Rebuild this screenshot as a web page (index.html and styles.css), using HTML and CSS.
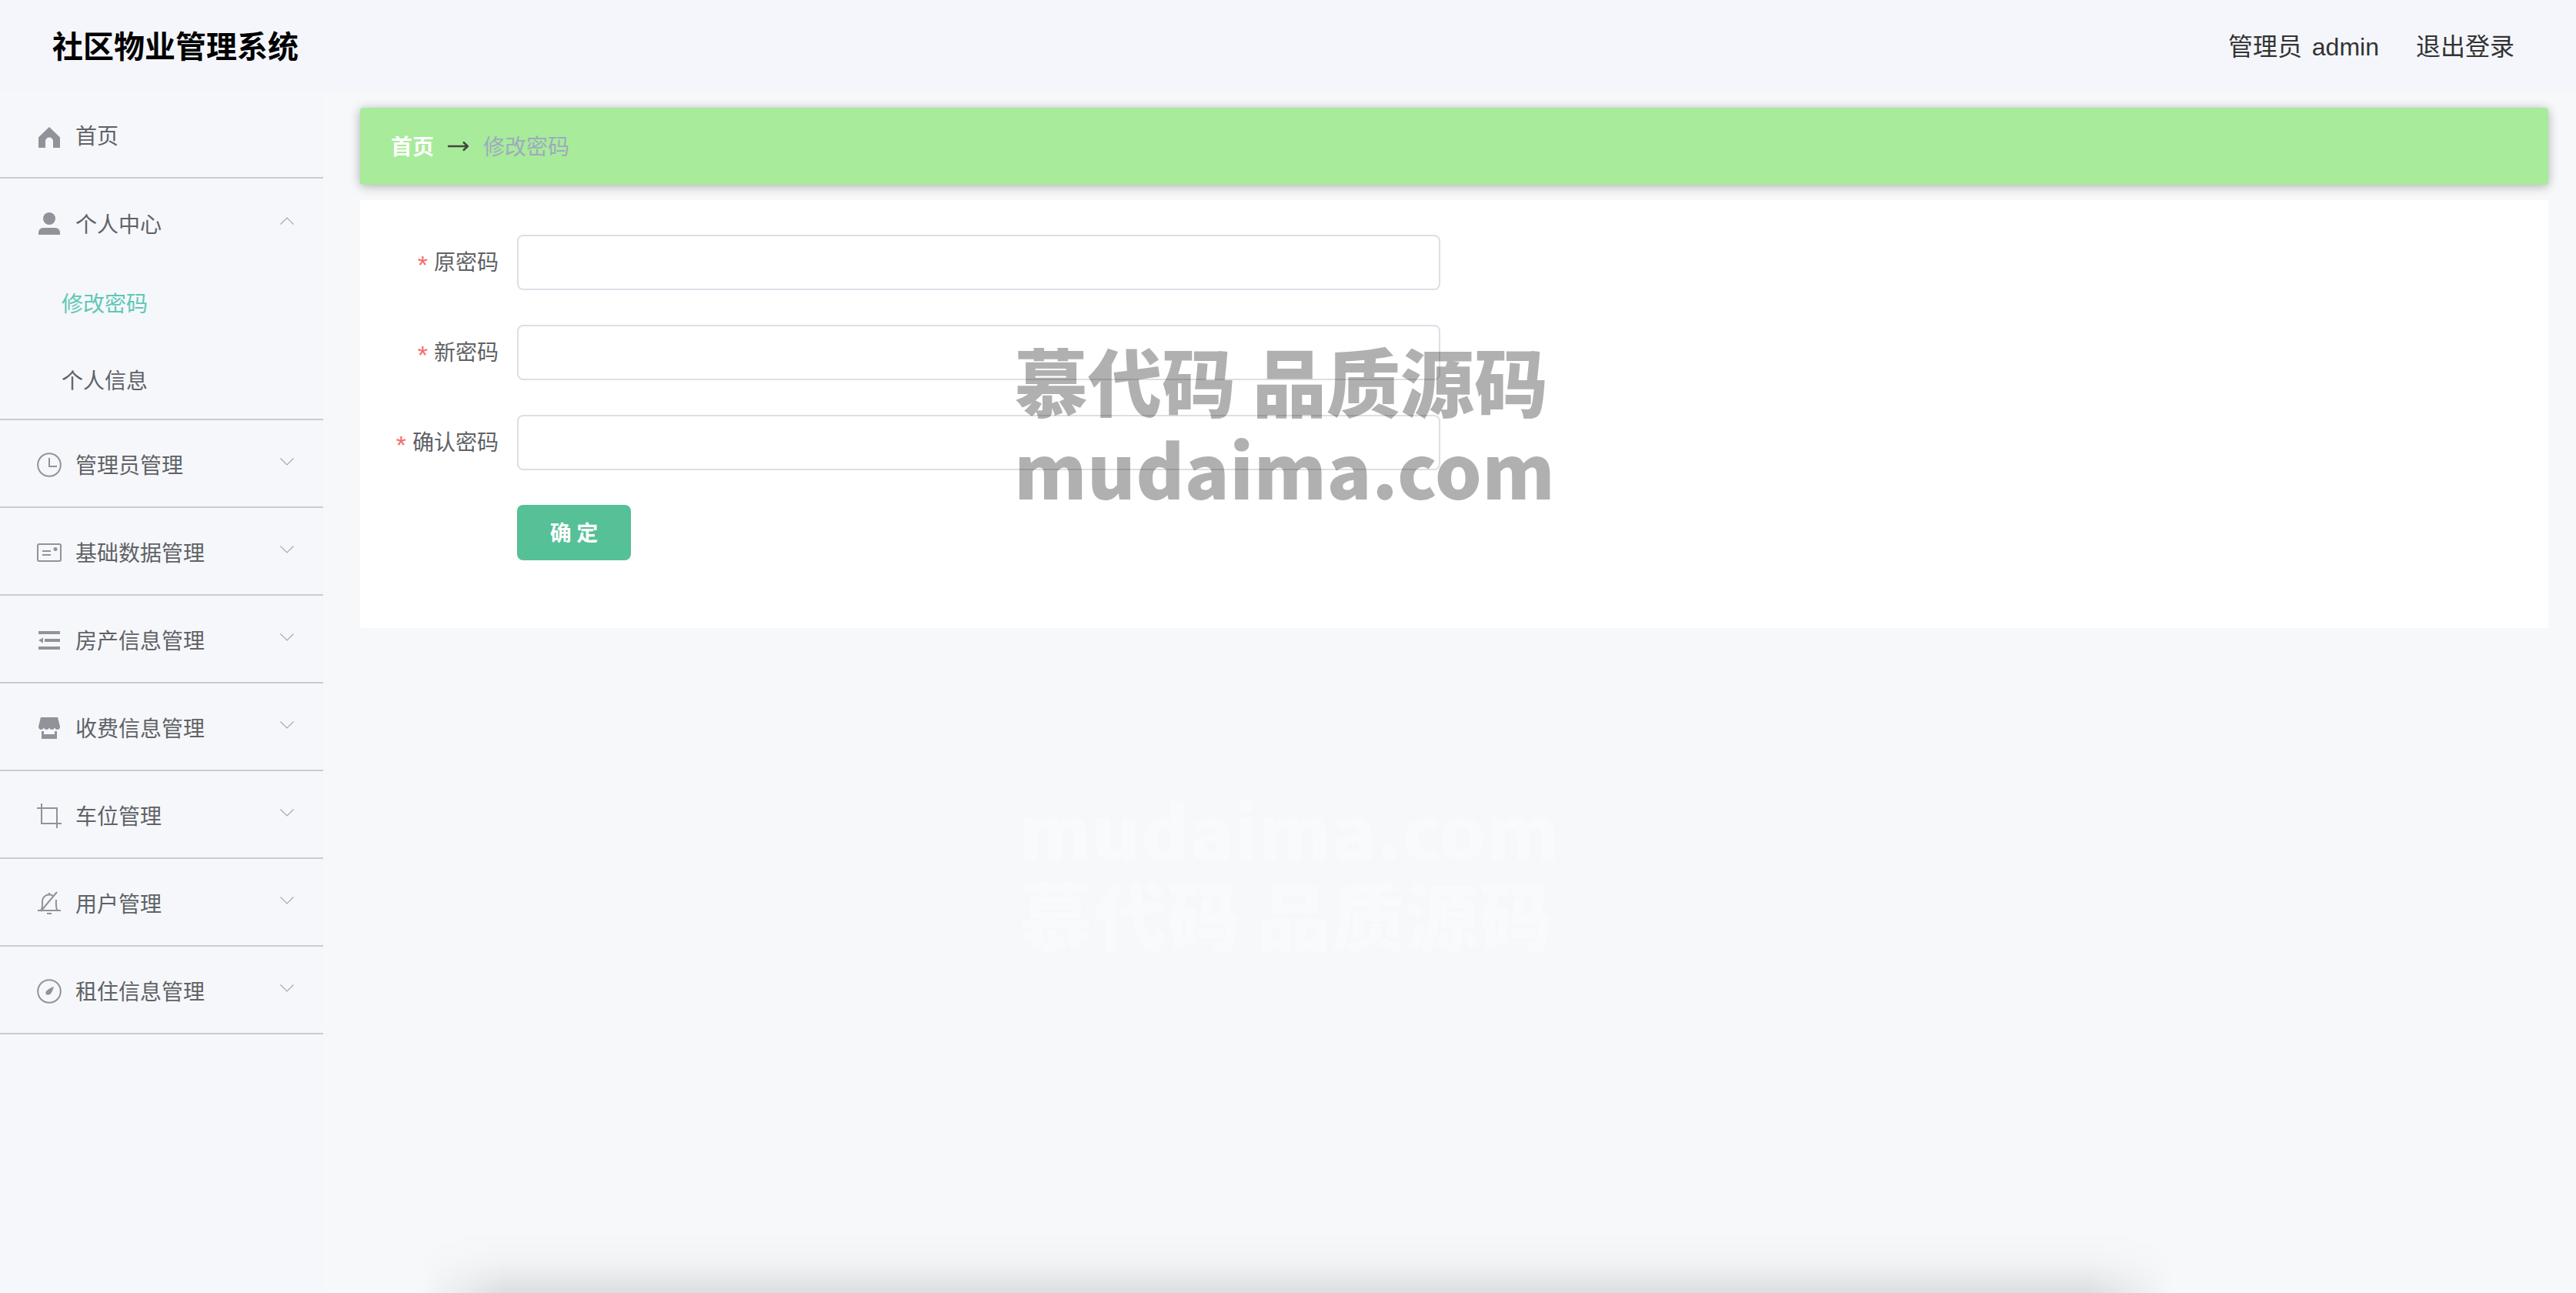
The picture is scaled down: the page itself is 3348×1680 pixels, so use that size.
FILE: index.html
```html
<!DOCTYPE html>
<html lang="zh-CN">
<head>
<meta charset="utf-8">
<title>社区物业管理系统</title>
<link rel="stylesheet" href="styles.css">
</head>
<body>
<div class="app">
  <header class="topbar">
    <div class="brand">社区物业管理系统</div>
    <div class="account">
      <span class="user">管理员 admin</span>
      <span>退出登录</span>
    </div>
  </header>
  <div class="body-row">
    <aside class="aside">
      <a class="item first">
        <svg class="ico" viewBox="0 0 32 32"><path d="M16 5 30 18.500V32H21V23.500A5 5 0 0 0 11 23.500V32H2V18.500Z"/></svg>
        <span>首页</span>
      </a>
      <div class="group">
        <a class="item no-line">
          <svg class="ico" viewBox="0 0 32 32"><circle cx="16" cy="9" r="8"/><path d="M2 30V27A6 6 0 0 1 8 21H24A6 6 0 0 1 30 27V30Z"/></svg>
          <span>个人中心</span>
          <svg class="chev" viewBox="0 0 18 10"><path d="M.5 9.500 9 1l8.500 8.500"/></svg>
        </a>
        <a class="sub active">修改密码</a>
        <a class="sub">个人信息</a>
      </div>
      <a class="item">
        <svg class="ico line" viewBox="0 0 32 32"><circle cx="16" cy="16" r="14.800"/><path d="M16 7V18H26"/></svg>
        <span>管理员管理</span>
        <svg class="chev" viewBox="0 0 18 10"><path d="M.5.500 9 9l8.500-8.500"/></svg>
      </a>
      <a class="item">
        <svg class="ico line" viewBox="0 0 32 32"><rect x="1" y="5" width="30" height="22" rx="2"/><path d="M7 14H18M7 19H18"/><circle class="dot" cx="24" cy="11.500" r="2.500"/></svg>
        <span>基础数据管理</span>
        <svg class="chev" viewBox="0 0 18 10"><path d="M.5.500 9 9l8.500-8.500"/></svg>
      </a>
      <a class="item">
        <svg class="ico" viewBox="0 0 32 32"><path d="M2 4H30V8H2ZM10 14H30V18H10ZM2 24H30V28H2ZM2 16 8 12.500V19.500Z"/></svg>
        <span>房产信息管理</span>
        <svg class="chev" viewBox="0 0 18 10"><path d="M.5.500 9 9l8.500-8.500"/></svg>
      </a>
      <a class="item">
        <svg class="ico" viewBox="0 0 32 32"><path d="M5 2H27L30 14Q30 18 26.500 18 24 18 23 15.500 22 18 19.500 18 17 18 16 15.500 15 18 12.500 18 10 18 9 15.500 8 18 5.500 18 2 18 2 14ZM6 20H9V24H23V20H26V30H6Z"/></svg>
        <span>收费信息管理</span>
        <svg class="chev" viewBox="0 0 18 10"><path d="M.5.500 9 9l8.500-8.500"/></svg>
      </a>
      <a class="item">
        <svg class="ico line" viewBox="0 0 32 32"><path d="M6 0V26H32M0 6H26V32"/></svg>
        <span>车位管理</span>
        <svg class="chev" viewBox="0 0 18 10"><path d="M.5.500 9 9l8.500-8.500"/></svg>
      </a>
      <a class="item">
        <svg class="ico line" viewBox="0 0 32 32"><path d="M1 25H31M5 25C8 21 7 17 7 13A9 9 0 0 1 21 6M25 11C25 17 24 22 27 25M13 29H19M16 2V4M5 26 26 1"/></svg>
        <span>用户管理</span>
        <svg class="chev" viewBox="0 0 18 10"><path d="M.5.500 9 9l8.500-8.500"/></svg>
      </a>
      <a class="item">
        <svg class="ico line" viewBox="0 0 32 32"><circle cx="16" cy="16" r="14.800"/><path class="dot" d="M22 10C21 14 19 18 17.500 19.500 16 21 13 21 12 20 11 19 11 17 12.500 15.500 14 14 18 11 22 10Z"/></svg>
        <span>租住信息管理</span>
        <svg class="chev" viewBox="0 0 18 10"><path d="M.5.500 9 9l8.500-8.500"/></svg>
      </a>
    </aside>
    <main class="main">
      <nav class="crumb">
        <span class="crumb-home">首页</span>
        <svg class="crumb-sep" viewBox="0 0 27 14"><path d="M0 7H26M20 1.500 26 7 20 12.500"/></svg>
        <span class="crumb-cur">修改密码</span>
      </nav>
      <form class="card">
        <div class="field">
          <label class="label"><span class="req">*</span>原密码</label>
          <input class="input" type="password">
        </div>
        <div class="field">
          <label class="label"><span class="req">*</span>新密码</label>
          <input class="input" type="password">
        </div>
        <div class="field">
          <label class="label"><span class="req">*</span>确认密码</label>
          <input class="input" type="password">
        </div>
        <div class="field">
          <span class="label"></span>
          <button class="btn" type="button">确 定</button>
        </div>
      </form>
    </main>
  </div>
</div>
<div class="mark mark-top">慕代码 品质源码<br><span class="mark-latin">mudaima.com</span></div>
<div class="mark mark-low"><span class="mark-latin">mudaima.com</span><br>慕代码 品质源码</div>
<div class="edge-shadow"></div>
</body>
</html>
```
FILE: styles.css
```css
* { box-sizing: border-box; }
html, body { margin: 0; height: 100%; overflow: hidden; }
body {
  position: relative;
  width: 3348px;
  height: 1680px;
  background: #f7f8fa;
  font-family: "Noto Sans CJK SC", sans-serif;
  font-size: 28px;
  color: #606266;
}
.app { display: flex; flex-direction: column; height: 100%; }
.topbar {
  flex: 0 0 120px;
  display: flex;
  align-items: center;
  justify-content: space-between;
  padding: 0 80px 4px 68px;
  background: #f4f6fb;
}
.brand { font-size: 40px; font-weight: 700; color: #000; }
.account {
  display: flex;
  gap: 48px;
  font-family: "Liberation Sans", "Noto Sans CJK SC", sans-serif;
  font-size: 32px;
  color: #333;
}
.user { word-spacing: 4px; }
.body-row { flex: 1; display: flex; min-height: 0; }
.aside { flex: 0 0 420px; background: #f5f7fb; }
.item {
  display: flex;
  align-items: center;
  height: 114px;
  padding: 2px 38px 0 48px;
  border-bottom: 2px solid #cccccc;
}
.item.first { height: 112px; padding-top: 0; }
.item.no-line { height: 112px; padding-top: 4px; border-bottom: 0; }
.item > span { margin-left: 18px; }
.ico { width: 32px; height: 32px; margin-top: 2px; fill: #909399; flex: none; }
.ico.line { fill: none; stroke: #909399; stroke-width: 2; }
.ico .dot { fill: #909399; stroke: none; }
.chev {
  width: 18px;
  height: 10px;
  margin-left: auto;
  margin-bottom: 7px;
  fill: none;
  stroke: #a6a9ad;
  stroke-width: 1.2;
  flex: none;
}
.group { border-bottom: 2px solid #cccccc; }
.sub { display: flex; align-items: center; height: 100px; padding: 0 0 2px 80px; }
.sub.active { color: #5ec8b5; }
.main { flex: 1; padding: 20px 36px 0 48px; }
.crumb {
  display: flex;
  align-items: center;
  height: 100px;
  padding: 0 0 3px 40px;
  background: #a8eb9a;
  border-radius: 4px;
  box-shadow: 0 2px 14px rgba(0, 0, 0, .3);
}
.crumb-home { color: #fff; font-weight: 700; }
.crumb-sep {
  width: 27px;
  height: 14px;
  margin: 3px 19px 0 18px;
  fill: none;
  stroke: #444;
  stroke-width: 2.5;
  flex: none;
}
.crumb-cur { color: #9daabf; }
.card {
  margin-top: 20px;
  height: 556px;
  padding-top: 45px;
  background: #fff;
  display: flex;
  flex-direction: column;
  gap: 45px;
}
.field { display: flex; align-items: center; height: 72px; }
.label {
  width: 180px;
  margin-right: 24px;
  padding-bottom: 5px;
  text-align: right;
  flex: none;
}
.req {
  margin-right: 8px;
  font-family: "Liberation Sans", sans-serif;
  font-size: 34px;
  line-height: 0;
  vertical-align: -5px;
  color: #f56c6c;
}
.input {
  width: 1200px;
  height: 72px;
  border: 2px solid #dcdfe6;
  border-radius: 8px;
  background: #fff;
}
.btn {
  width: 148px;
  height: 72px;
  padding: 0 0 3px;
  border: 0;
  border-radius: 8px;
  background: #56c096;
  color: #fff;
  font: 700 28px "Noto Sans CJK SC", sans-serif;
}
.mark {
  position: absolute;
  font-size: 96px;
  font-weight: 900;
  white-space: nowrap;
  pointer-events: none;
}
.mark-latin { letter-spacing: .4px; }
.mark-top { left: 1318px; top: 435px; line-height: 115px; color: rgba(0, 0, 0, .31); }
.mark-low { left: 1324px; top: 1022px; line-height: 110px; color: rgba(255, 255, 255, .3); }
.edge-shadow {
  position: absolute;
  left: 545px;
  bottom: 0;
  width: 2280px;
  height: 80px;
  background: linear-gradient(to top, rgba(0, 0, 0, .1), rgba(0, 0, 0, .06) 25%, rgba(0, 0, 0, .025) 50%, rgba(0, 0, 0, .008) 75%, transparent);
  -webkit-mask-image: linear-gradient(to right, transparent, #000 110px, #000 2170px, transparent);
  mask-image: linear-gradient(to right, transparent, #000 110px, #000 2170px, transparent);
}
```
